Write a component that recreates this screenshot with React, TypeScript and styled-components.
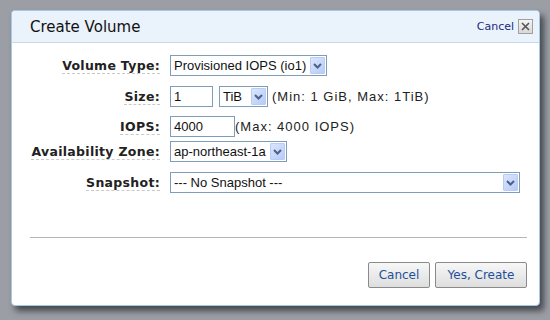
import React from "react";
import styled, { createGlobalStyle } from "styled-components";

const Global = createGlobalStyle`
  html, body { margin: 0; padding: 0; }
  body {
    width: 550px; height: 320px; overflow: hidden;
    background: #9b9fa5;
    font-family: "DejaVu Sans", Verdana, sans-serif;
  }
`;

const Page = styled.div`
  width: 550px;
  height: 320px;
  padding: 10px 0 0 11px;
  box-sizing: border-box;
`;

const Dialog = styled.div`
  width: 529px;
  height: 296px;
  box-sizing: border-box;
  background: #fff;
  border: 1px solid #a8c6e6;
  border-radius: 4px;
  box-shadow: 4px 5px 6px rgba(40, 44, 50, 0.75);
  overflow: hidden;
  display: flex;
  flex-direction: column;
`;

const Header = styled.div`
  height: 32px;
  box-sizing: border-box;
  background: #eaf2fc;
  border-bottom: 1px solid #c4dbf0;
  display: flex;
  align-items: center;
  padding: 0 6px 0 18px;
`;

const Title = styled.div`
  flex: 1;
  font-size: 15px;
  color: #111;
  padding-top: 1px;
`;

const CancelLink = styled.a`
  font-size: 11px;
  color: #1a2a80;
  margin-right: 4px;
  cursor: pointer;
`;

const CloseBox = styled.span`
  width: 13px;
  height: 13px;
  border: 1px solid #a0a0a0;
  background: linear-gradient(#f4f4f4, #d8d8d8);
  display: flex;
  align-items: center;
  justify-content: center;
`;

const Body = styled.div`
  flex: 1;
  padding: 7px 12px 0 18px;
  display: flex;
  flex-direction: column;
`;

const Form = styled.div`
  display: grid;
  grid-template-columns: 130px 1fr;
  column-gap: 10px;
`;

const LabelCell = styled.div<{ $h: number }>`
  height: ${(p) => p.$h}px;
  display: flex;
  align-items: center;
  justify-content: flex-end;
`;

const Label = styled.span`
  font-weight: bold;
  font-size: 12.5px;
  color: #222;
  letter-spacing: 0.3px;
  border-bottom: 1px dashed #c8c8c8;
  line-height: 15px;
`;

const FieldCell = styled.div<{ $h: number }>`
  height: ${(p) => p.$h}px;
  display: flex;
  align-items: center;
  gap: 6px;
  font-family: "Liberation Sans", Arial, sans-serif;
  font-size: 13px;
  color: #111;
`;

const Select = styled.div<{ $w: number }>`
  width: ${(p) => p.$w}px;
  height: 21px;
  box-sizing: border-box;
  border: 1px solid #7f9db9;
  background: #fff;
  display: flex;
  align-items: center;
  padding-left: 3px;
  padding-right: 1px;
`;

const SelectText = styled.span`
  flex: 1;
  white-space: nowrap;
`;

const Arrow = styled.span`
  width: 15px;
  height: 17px;
  box-sizing: border-box;
  border: 1px solid #b8cdf5;
  border-radius: 1px;
  background: linear-gradient(135deg, #dbe6fd, #b7cbf8);
  display: flex;
  align-items: center;
  justify-content: center;
`;

const Input = styled.div<{ $w: number }>`
  width: ${(p) => p.$w}px;
  height: 21px;
  box-sizing: border-box;
  border: 1px solid #7f9db9;
  background: #fff;
  display: flex;
  align-items: center;
  padding-left: 3px;
`;

const Hint = styled.span<{ $pull?: number }>`
  white-space: nowrap;
  font-family: "Liberation Sans", Arial, sans-serif;
  font-size: 13px;
  letter-spacing: 1px;
  color: #222;
  margin-left: ${(p) => -(p.$pull ?? 0)}px;
`;

const Separator = styled.div`
  margin-top: 34px;
  height: 1px;
  background: #b5b5b5;
`;

const Footer = styled.div`
  display: flex;
  justify-content: flex-end;
  gap: 5px;
  padding-top: 24px;
`;

const Button = styled.button<{ $w: number }>`
  width: ${(p) => p.$w}px;
  height: 26px;
  border: 1px solid #8a8a8a;
  border-radius: 2px;
  background: linear-gradient(#f7f7f7, #dedede);
  font-family: "DejaVu Sans", Verdana, sans-serif;
  font-size: 12px;
  color: #1e4f9a;
  padding: 0;
`;

const ArrowIcon = () => (
  <Arrow>
    <svg width="9" height="6" viewBox="0 0 9 6">
      <path d="M1 1 L4.5 4.5 L8 1" fill="none" stroke="#4d6185" strokeWidth="2" />
    </svg>
  </Arrow>
);

const rows: { label: string; h: number; field: React.ReactNode }[] = [
  {
    label: "Volume Type:",
    h: 31,
    field: (
      <Select $w={157}>
        <SelectText>Provisioned IOPS (io1)</SelectText>
        <ArrowIcon />
      </Select>
    ),
  },
  {
    label: "Size:",
    h: 31,
    field: (
      <>
        <Input $w={43}>1</Input>
        <Select $w={49}>
          <SelectText>TiB</SelectText>
          <ArrowIcon />
        </Select>
        <Hint $pull={2}>(Min: 1 GiB, Max: 1TiB)</Hint>
      </>
    ),
  },
  {
    label: "IOPS:",
    h: 29,
    field: (
      <>
        <Input $w={65}>4000</Input>
        <Hint $pull={6}>(Max: 4000 IOPS)</Hint>
      </>
    ),
  },
  {
    label: "Availability Zone:",
    h: 21,
    field: (
      <Select $w={117}>
        <SelectText>ap-northeast-1a</SelectText>
        <ArrowIcon />
      </Select>
    ),
  },
  {
    label: "Snapshot:",
    h: 41,
    field: (
      <Select $w={350}>
        <SelectText>--- No Snapshot ---</SelectText>
        <ArrowIcon />
      </Select>
    ),
  },
];

export default function App() {
  return (
    <>
      <Global />
      <Page>
        <Dialog>
          <Header>
            <Title>Create Volume</Title>
            <CancelLink>Cancel</CancelLink>
            <CloseBox>
              <svg width="9" height="9" viewBox="0 0 9 9">
                <path d="M1 1 L8 8 M8 1 L1 8" stroke="#555" strokeWidth="1.6" />
              </svg>
            </CloseBox>
          </Header>
          <Body>
            <Form>
              {rows.map((r) => (
                <React.Fragment key={r.label}>
                  <LabelCell $h={r.h}>
                    <Label>{r.label}</Label>
                  </LabelCell>
                  <FieldCell $h={r.h}>{r.field}</FieldCell>
                </React.Fragment>
              ))}
            </Form>
            <Separator />
            <Footer>
              <Button $w={62}>Cancel</Button>
              <Button $w={92}>Yes, Create</Button>
            </Footer>
          </Body>
        </Dialog>
      </Page>
    </>
  );
}
